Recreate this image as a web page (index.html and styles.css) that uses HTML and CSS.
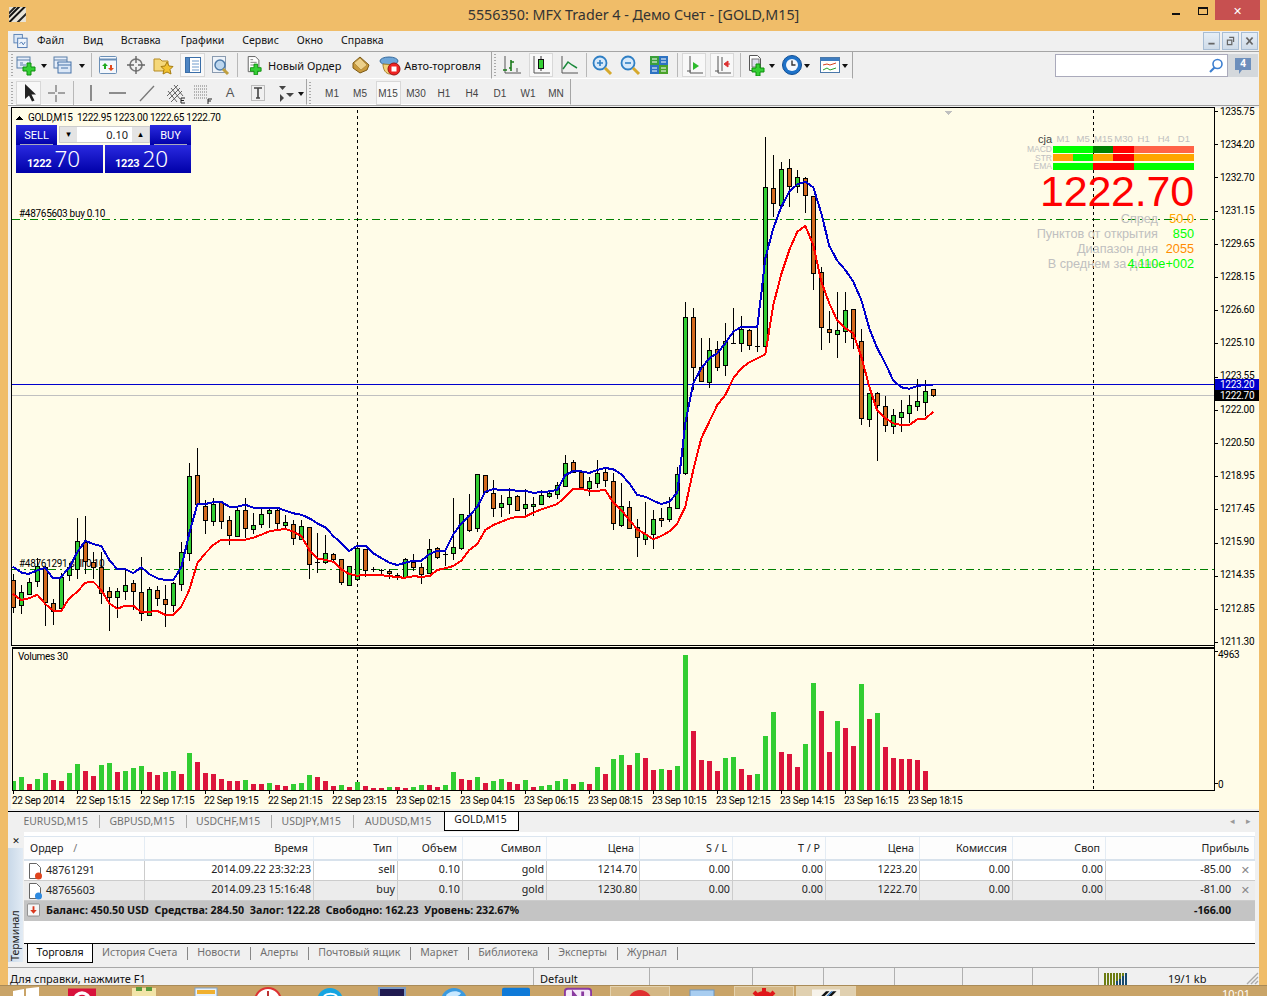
FILE: index.html
```html
<!DOCTYPE html>
<html lang="ru">
<head>
<meta charset="utf-8">
<title>MFX Trader 4</title>
<link rel="stylesheet" href="styles.css">
</head>
<body>
<div class="win">
  <header class="title">
    <svg class="logo" viewBox="0 0 18 16"><rect width="18" height="16" fill="#e8e4d8"/><path d="M0 9 9 0h3L0 12zM0 15 15 0h3L2 16H0z" fill="#111"/><path d="M5 0h3L0 8V5zM8 16l10-10v3l-7 7z" fill="#222"/></svg>
    <div class="title-text">5556350: MFX Trader 4 - Демо Счет - [GOLD,M15]</div>
    <div class="wc wc-min"></div><div class="wc wc-max"></div><div class="wc-close">✕</div>
  </header>

  <div class="client">
    <nav class="menu">
      <svg class="appicon" viewBox="0 0 16 16"><rect x="1" y="1" width="9" height="9" fill="#dbe7f5" stroke="#5b82b5"/><rect x="5" y="5" width="10" height="10" fill="#eef4fb" stroke="#4a76b0"/><path d="M7 11l2-2 2 3 2-3" fill="none" stroke="#4a76b0"/></svg>
      <span class="mi m1">Файл</span><span class="mi m2">Вид</span><span class="mi m3">Вставка</span><span class="mi m4">Графики</span><span class="mi m5">Сервис</span><span class="mi m6">Окно</span><span class="mi">Справка</span>
      <div class="mdi">
        <div class="mdib"><svg viewBox="0 0 17 18"><rect x="5" y="11" width="7" height="2" fill="#666"/></svg></div>
        <div class="mdib"><svg viewBox="0 0 17 18"><path d="M7 5h5v5M5 8h5v5H5z" fill="none" stroke="#666" stroke-width="1.4"/></svg></div>
        <div class="mdib"><svg viewBox="0 0 17 18"><path d="M5 5l7 8M12 5l-7 8" stroke="#666" stroke-width="2"/></svg></div>
      </div>
    </nav>

    <div class="row row1">
      <div class="tbar tb1">
        <i class="grip"></i>
        <span class="b w22"><svg viewBox="0 0 22 22"><rect x="2" y="3" width="13" height="11" fill="#e6eefa" stroke="#5a7fa8"/><path d="M2 6h13M5 9h3M5 11h6" stroke="#5a7fa8"/><path d="M12 9h4v4h4v4h-4v4h-4v-4H8v-4h4z" fill="#35cf35" stroke="#0d8f0d"/></svg></span>
        <span class="dd w13"></span>
        <span class="b w26"><svg viewBox="0 0 22 22"><rect x="2" y="3" width="13" height="11" fill="#e6eefa" stroke="#5a7fa8"/><path d="M2 6h13M5 9h7" stroke="#5a7fa8"/><rect x="6" y="8" width="13" height="11" fill="#dce8f7" stroke="#4672a8"/><path d="M6 11h13M9 14h7" stroke="#4672a8"/></svg></span>
        <span class="dd w11"></span>
        <i class="sep w8"></i>
        <span class="b w26"><svg viewBox="0 0 22 22"><rect x="2.500" y="2.500" width="17" height="17" rx="1" fill="#f4f8fd" stroke="#6b8fb6"/><path d="M2.500 5.500h17" stroke="#6b8fb6" stroke-width="2"/><path d="M8 9l3 3H9v3H7v-3H5z" fill="#1fa91f"/><path d="M14 17l-3-3h2v-3h2v3h2z" fill="#e2491c"/></svg></span>
        <span class="b w30"><svg viewBox="0 0 22 22"><circle cx="11" cy="11" r="6" fill="none" stroke="#777" stroke-width="1.600"/><path d="M11 2v7M11 13v7M2 11h7M13 11h7" stroke="#666" stroke-width="1.400"/></svg></span>
        <span class="b w24"><svg viewBox="0 0 22 22"><path d="M2 5h6l2 2h6v10H2z" fill="#f5d87a" stroke="#b58b25"/><path d="M15 8l2 4 4 .5-3 3 1 4.500-4-2-4 2 1-4.500-3-3 4-.5z" fill="#f2c230" stroke="#a67c10"/></svg></span>
        <span class="b w25 ml5 on"><svg viewBox="0 0 22 22"><rect x="3.500" y="3.500" width="15" height="15" fill="#fff" stroke="#3a6ea8"/><rect x="3.500" y="3.500" width="4" height="15" fill="#4f86c4" stroke="#3a6ea8"/><path d="M10 7h7M10 10h7M10 13h7M10 16h7" stroke="#6f9bcc"/></svg></span>
        <span class="b w30"><svg viewBox="0 0 22 22"><rect x="3.500" y="2.500" width="13" height="16" fill="#eef3f9" stroke="#8a9bb0"/><circle cx="11" cy="11" r="5" fill="#bcd6ee" stroke="#4d7aa8" stroke-width="1.500"/><path d="M14 15l5 5" stroke="#c0a040" stroke-width="3"/></svg></span>
        <i class="sep w4"></i>
        <span class="order ml7"><svg viewBox="0 0 18 22"><path d="M2.500 1.500h8l4 4v13h-12z" fill="#fff" stroke="#555"/><path d="M5 8h7M5 11h5M5 5h3" stroke="#777"/><path d="M9 10h4v4h4v4h-4v4H9v-4H5v-4h4z" fill="#35cf35" stroke="#0d8f0d"/></svg><span class="btxt">Новый Ордер</span></span>
        <span class="b w24 ml8"><svg viewBox="0 0 22 22"><path d="M3 9 10 3l9 8-2 5-7 3-7-5z" fill="#c99a3c" stroke="#7c5a16"/><path d="M4 9l6-5 7 7-6 5z" fill="#ecd08a" stroke="#a98334" stroke-width=".7"/></svg></span>
        <span class="order ml5"><svg class="big" viewBox="0 0 24 22"><ellipse cx="11" cy="7" rx="9" ry="4" fill="#6ea6d8" stroke="#34689c"/><path d="M5 10c0 6 3 10 7 10s6-4 6-9z" fill="#f2d27a" stroke="#a3802a"/><circle cx="16" cy="15" r="6" fill="#e22" stroke="#911"/><rect x="13.500" y="12.500" width="5" height="5" fill="#fff"/></svg><span class="btxt tight">Авто-торговля</span></span>
      </div>
      <div class="tbar tb2">
        <i class="grip"></i>
        <span class="b w24 ml2"><svg viewBox="0 0 22 22"><path d="M4 2v17h16" fill="none" stroke="#555"/><path d="M2 16h4M10 6v11M8 14h2M10 8h3" stroke="#1b7a1b" stroke-width="1.600"/><path d="M16 14v4" stroke="#555"/></svg></span>
        <span class="b w24 ml5 on"><svg viewBox="0 0 22 22"><path d="M4 2v17h16" fill="none" stroke="#555"/><path d="M11 2v15" stroke="#333"/><rect x="8.500" y="5.500" width="5" height="9" fill="#35cf35" stroke="#111"/></svg></span>
        <span class="b w24 ml4"><svg viewBox="0 0 22 22"><path d="M4 2v17h16" fill="none" stroke="#555"/><path d="M5 15l5-7 4 3 5 3" fill="none" stroke="#1b8a3b" stroke-width="1.500"/></svg></span>
        <i class="sep w10"></i>
        <span class="b w22"><svg viewBox="0 0 22 22"><circle cx="9" cy="9" r="6.500" fill="#d7e9fa" stroke="#2f7fc4" stroke-width="1.800"/><path d="M6 9h6M9 6v6" stroke="#2f7fc4" stroke-width="1.600"/><path d="M14 14l6 6" stroke="#d6a92d" stroke-width="3"/></svg></span>
        <span class="b w24 ml5"><svg viewBox="0 0 22 22"><circle cx="9" cy="9" r="6.500" fill="#d7e9fa" stroke="#2f7fc4" stroke-width="1.800"/><path d="M6 9h6" stroke="#2f7fc4" stroke-width="1.600"/><path d="M14 14l6 6" stroke="#d6a92d" stroke-width="3"/></svg></span>
        <span class="b w24 ml5"><svg viewBox="0 0 22 22"><rect x="2" y="2" width="9" height="9" fill="#3aa03a"/><rect x="11" y="2" width="9" height="9" fill="#2d72c2"/><rect x="2" y="11" width="9" height="9" fill="#2d72c2"/><rect x="11" y="11" width="9" height="9" fill="#4aa32a"/><path d="M4 5h5M13 5h5M4 14h5M13 14h5M4 8h5M13 8h5M4 17h5M13 17h5" stroke="#fff"/></svg></span>
        <i class="sep w9 ml1"></i>
        <span class="b w24 ml1 on"><svg viewBox="0 0 22 22"><path d="M7 2v17H20M4 17h4" fill="none" stroke="#555"/><path d="M10 8l6 4-6 4z" fill="#2dbb2d"/></svg></span>
        <span class="b w24 ml4 on"><svg viewBox="0 0 22 22"><path d="M7 2v17H20M4 17h4M11 3v14" fill="none" stroke="#555"/><path d="M19 10h-5M17 7l-4 3 4 3z" fill="#d33" stroke="#d33"/></svg></span>
        <i class="sep w9 ml1"></i>
        <span class="b w25"><svg viewBox="0 0 22 22"><path d="M3.500 1.500h8l3 3v12h-11z" fill="#fff" stroke="#555"/><rect x="6" y="5" width="7" height="8" fill="#dde" stroke="#777"/><path d="M10 10h4v4h4v4h-4v4h-4v-4H6v-4h4z" fill="#35cf35" stroke="#0d8f0d"/></svg></span>
        <span class="dd w5"></span>
        <span class="b w24 ml6"><svg viewBox="0 0 22 22"><circle cx="11" cy="11" r="9.500" fill="#1f72c8" stroke="#124f94"/><circle cx="11" cy="11" r="6" fill="#f4f8fc"/><path d="M11 6.500V11h3.500" fill="none" stroke="#333" stroke-width="1.400"/></svg></span>
        <span class="dd w6"></span>
        <span class="b w24 ml8"><svg viewBox="0 0 22 22"><rect x="1.500" y="3.500" width="19" height="15" fill="#fff" stroke="#4a78aa"/><rect x="2" y="4" width="18" height="3" fill="#3f7dc0"/><path d="M4 11l4-1 3 1 6-2" fill="none" stroke="#d6411c"/><path d="M4 16l4-2 3 2 6-2" fill="none" stroke="#2aa12a"/></svg></span>
        <span class="dd w6"></span>
      </div>
      <div class="search">
        <div class="sbox"><svg viewBox="0 0 16 16"><circle cx="9.500" cy="6" r="4.500" fill="none" stroke="#3d7fd0" stroke-width="1.600"/><path d="M6.500 9.500 2 14" stroke="#3d7fd0" stroke-width="2.200"/></svg></div>
        <div class="msg"><svg viewBox="0 0 18 18"><path d="M1 1h16v12H8l-3 4v-4H1z" fill="#6d8fbc"/></svg><span>4</span></div>
      </div>
    </div>

    <div class="row row2">
      <div class="tbar tb3">
        <i class="grip"></i>
        <span class="b w25 ml1 on"><svg viewBox="0 0 22 22"><path d="M7 2v15l4-3.500 3 6 2.500-1-3-6H18z" fill="#222"/></svg></span>
        <span class="b w24 ml3"><svg viewBox="0 0 22 22"><path d="M11 3v7M11 13v7M3 11h7M13 11h7" stroke="#555"/></svg></span>
        <i class="sep w10"></i>
        <span class="b w24"><svg viewBox="0 0 22 22"><path d="M12 3v16" stroke="#555" stroke-width="1.300"/></svg></span>
        <span class="b w24 ml4"><svg viewBox="0 0 22 22"><path d="M2 11h17" stroke="#555" stroke-width="1.300"/></svg></span>
        <span class="b w24 ml5"><svg viewBox="0 0 22 22"><path d="M4 19 18 4" stroke="#777" stroke-width="1.300"/></svg></span>
        <span class="b w24 ml4"><svg viewBox="0 0 22 22"><path d="M3 14 14 3M5 17 16 6M7 20 18 9M4 9l9 11M7 6l9 11M10 3l9 11" stroke="#555" stroke-width=".9"/><path d="M17 16h4M17 18.500h3M17 21h4M17 16v5" stroke="#222"/></svg></span>
        <span class="b w24 ml3"><svg viewBox="0 0 22 22"><path d="M3 4h14M3 7h14M3 10h14M3 13h14M3 16h14" stroke="#777" stroke-dasharray="1 1"/><path d="M17 17h4M17 19h3M17 17v5" stroke="#222"/></svg></span>
        <span class="b w24 ml4 lt">A</span>
        <span class="b w24 ml4"><svg viewBox="0 0 22 22"><rect x="4.500" y="3.500" width="13" height="15" fill="none" stroke="#888" stroke-dasharray="1 1"/><path d="M7 6h8M11 6v10M9 16h4" stroke="#444" stroke-width="1.600" fill="none"/></svg></span>
        <span class="b w24 ml4"><svg viewBox="0 0 22 22"><path d="M4 4h7l-3.500 4zM11 11h8l-4 4zM5 12l4 4-4 4z" fill="#444"/></svg></span>
        <span class="dd w6"></span>
      </div>
      <div class="tbar tb4">
        <i class="grip"></i>
        <span class="tf ml5">M1</span><span class="tf">M5</span><span class="tf on">M15</span><span class="tf">M30</span><span class="tf">H1</span><span class="tf">H4</span><span class="tf">D1</span><span class="tf">W1</span><span class="tf">MN</span>
      </div>
    </div>

    <div class="chartwrap">
      <svg id="chart" class="chart" viewBox="8 106 1251 705" width="1251" height="705">
        <rect x="8" y="106" width="1251" height="705" fill="#f0f0f0"/>
        <rect x="11" y="108" width="1248" height="701" fill="#fffce8"/>
        <g class="ct">
          <text x="28" y="121">GOLD,M15  1222.95 1223.00 1222.65 1222.70</text>
          <path d="M15 120h8l-4-4z" fill="#000"/>
          <text x="19" y="217">#48765603 buy 0.10</text>
          <text x="19" y="567">#48761291 sell 0.10</text>
          <text x="18" y="660">Volumes 30</text>
        </g>
        <g class="ax">
          <text x="1220" y="115">1235.75</text><text x="1220" y="148">1234.20</text><text x="1220" y="181">1232.70</text><text x="1220" y="214">1231.15</text><text x="1220" y="247">1229.65</text><text x="1220" y="280">1228.15</text><text x="1220" y="313">1226.60</text><text x="1220" y="346">1225.10</text><text x="1220" y="379">1223.55</text><text x="1220" y="413">1222.00</text><text x="1220" y="446">1220.50</text><text x="1220" y="479">1218.95</text><text x="1220" y="512">1217.45</text><text x="1220" y="545">1215.90</text><text x="1220" y="578">1214.35</text><text x="1220" y="612">1212.85</text><text x="1220" y="645">1211.30</text>
          <text x="1218" y="658">4963</text><text x="1218" y="788">0</text>
          <text x="12" y="804">22 Sep 2014</text><text x="76" y="804">22 Sep 15:15</text><text x="140" y="804">22 Sep 17:15</text><text x="204" y="804">22 Sep 19:15</text><text x="268" y="804">22 Sep 21:15</text><text x="332" y="804">22 Sep 23:15</text><text x="396" y="804">23 Sep 02:15</text><text x="460" y="804">23 Sep 04:15</text><text x="524" y="804">23 Sep 06:15</text><text x="588" y="804">23 Sep 08:15</text><text x="652" y="804">23 Sep 10:15</text><text x="716" y="804">23 Sep 12:15</text><text x="780" y="804">23 Sep 14:15</text><text x="844" y="804">23 Sep 16:15</text><text x="908" y="804">23 Sep 18:15</text>
        </g>
      </svg>

      <div class="trade">
        <div class="trow">
          <div class="tbtn small"><span>SELL</span></div>
          <div class="lot"><span class="spin">▾</span><span class="lotv">0.10</span><span class="spin">▴</span></div>
          <div class="tbtn small"><span>BUY</span></div>
        </div>
        <div class="trow gap">
          <div class="tbtn price pl"><b>1222</b><em>70</em></div>
          <div class="tbtn price pr"><b>1223</b><em>20</em></div>
        </div>
      </div>

      <div class="cja">
        <div class="chead"><span class="cname">cja</span><div class="tfs"><span>M1</span><span>M5</span><span>M15</span><span>M30</span><span>H1</span><span>H4</span><span>D1</span></div></div>
        <div class="crow"><span>MACD</span><div class="bars"><i class="s2 lime"></i><i class="s1 grn"></i><i class="s1 red"></i><i class="s3 tom"></i></div></div>
        <div class="crow"><span>STR</span><div class="bars"><i class="s1 org"></i><i class="s1 lime"></i><i class="s1 org"></i><i class="s1 red"></i><i class="s3 org"></i></div></div>
        <div class="crow"><span>EMA</span><div class="bars"><i class="s2 lime"></i><i class="s2 red"></i><i class="s3 lime"></i></div></div>
        <div class="cprice">1222.70</div>
        <div class="cl"><span class="lbl">Спред</span><span class="val v-org">50.0</span></div>
        <div class="cl"><span class="lbl">Пунктов от открытия</span><span class="val v-lime">850</span></div>
        <div class="cl"><span class="lbl">Диапазон дня</span><span class="val v-dorg">2055</span></div>
        <div class="cl"><span class="lbl">В среднем за день</span><span class="val v-lime">4.110e+002</span></div>
      </div>
    </div>

    <div class="tabs">
      <span class="tab">EURUSD,M15</span><span class="tab">GBPUSD,M15</span><span class="tab">USDCHF,M15</span><span class="tab">USDJPY,M15</span><span class="tab">AUDUSD,M15</span><span class="tab active">GOLD,M15</span>
      <span class="scroll">◂</span><span class="scroll">▸</span>
    </div>

    <section class="term">
      <aside class="side"><span class="x">✕</span><span class="vt">Терминал</span></aside>
      <div class="tmain">
        <div class="grid head">
          <span class="l">Ордер <span class="sort">/</span></span><span>Время</span><span>Тип</span><span>Объем</span><span>Символ</span><span>Цена</span><span>S / L</span><span>T / P</span><span>Цена</span><span>Комиссия</span><span>Своп</span><span>Прибыль</span>
        </div>
        <div class="grid rowd">
          <span class="l"><svg viewBox="0 0 16 18"><path d="M2.500 1.500h7l4 4v11h-11z" fill="#fff" stroke="#666"/><circle cx="11.500" cy="14" r="3.500" fill="#e0441c"/></svg>48761291</span><span>2014.09.22 23:32:23</span><span>sell</span><span>0.10</span><span>gold</span><span>1214.70</span><span>0.00</span><span>0.00</span><span>1223.20</span><span>0.00</span><span>0.00</span><span class="pf">-85.00<i class="cx">✕</i></span>
        </div>
        <div class="grid rowd alt">
          <span class="l"><svg viewBox="0 0 16 18"><path d="M2.500 1.500h7l4 4v11h-11z" fill="#fff" stroke="#666"/><circle cx="11.500" cy="14" r="3.500" fill="#2d8ae0"/></svg>48765603</span><span>2014.09.23 15:16:48</span><span>buy</span><span>0.10</span><span>gold</span><span>1230.80</span><span>0.00</span><span>0.00</span><span>1222.70</span><span>0.00</span><span>0.00</span><span class="pf">-81.00<i class="cx">✕</i></span>
        </div>
        <div class="sum">
          <svg viewBox="0 0 14 14"><rect x=".5" y=".5" width="13" height="13" rx="1" fill="#f6f6f6" stroke="#888"/><path d="M7 11 3.500 7H6V3h2v4h2.500z" fill="#d9381e"/></svg>
          <b class="stext">Баланс: 450.50 USD&nbsp; Средства: 284.50&nbsp; Залог: 122.28&nbsp; Свободно: 162.23&nbsp; Уровень: 232.67%</b>
          <b class="stotal">-166.00</b>
        </div>
        <div class="blank"></div>
        <div class="btabs">
          <span class="btab active">Торговля</span><span class="btab">История Счета</span><span class="btab">Новости</span><span class="btab">Алерты</span><span class="btab">Почтовый ящик</span><span class="btab">Маркет</span><span class="btab">Библиотека</span><span class="btab">Эксперты</span><span class="btab">Журнал</span>
        </div>
      </div>
    </section>

    <footer class="status">
      <span class="st s-help">Для справки, нажмите F1</span>
      <span class="st s-def">Default</span>
      <span class="st s-a"></span><span class="st s-b"></span><span class="st s-c"></span><span class="st s-c2"></span><span class="st s-d"></span><span class="st s-e"></span>
      <span class="st s-conn"><svg viewBox="0 0 24 12"><path d="M1 0v12M4 0v12M7 0v12M10 0v12" stroke="#6d7d12" stroke-width="2"/><path d="M13 8v4M16 6v6M19 3v9M22 0v12" stroke="#174a6e" stroke-width="2"/><path d="M13 0v8M16 0v6M19 0v3" stroke="#6d7d12" stroke-width="2"/></svg><span>19/1 kb</span></span>
      <svg class="sgrip" viewBox="0 0 14 14"><path d="M13 2 2 13M13 6l-7 7M13 10l-3 3" stroke="#aaa" stroke-width="1.400"/></svg>
    </footer>
  </div>

  <div class="taskbar">
    <span class="slot first"><svg viewBox="0 0 28 24"><path d="M1 4l11-2v10H1zM14 1.500 27 0v12H14z" fill="#fff"/></svg></span>
    <span class="slot"><svg viewBox="0 0 32 24"><rect x="0" y="0" width="32" height="24" fill="#d8123c"/><circle cx="16" cy="13" r="10" fill="#fff"/><circle cx="16" cy="13" r="6" fill="#d8123c"/></svg></span>
    <span class="slot"><svg viewBox="0 0 28 24"><rect x="2" y="1" width="24" height="22" fill="#f2e4a8"/><path d="M6 0h6v4H6zM16 0h6v4h-6z" fill="#5a9a3a"/></svg></span>
    <span class="slot"><svg viewBox="0 0 24 24"><rect x="1" y="1" width="22" height="22" fill="#e8f1fa" stroke="#7ea2c8"/><rect x="3" y="3" width="18" height="4" fill="#f0b030"/></svg></span>
    <span class="slot"><svg viewBox="0 0 28 24"><circle cx="14" cy="14" r="13" fill="#fff" stroke="#d33" stroke-width="2"/><path d="M14 4v10l6 3" stroke="#b33" fill="none" stroke-width="2"/></svg></span>
    <span class="slot"><svg viewBox="0 0 28 24"><circle cx="14" cy="14" r="13" fill="#15a5e2"/><path d="M8 9c3-3 10-3 13 0" stroke="#fff" stroke-width="2" fill="none"/></svg></span>
    <span class="slot"><svg viewBox="0 0 28 24"><rect x="0" y="0" width="28" height="24" fill="#7d9cc4"/><rect x="2" y="2" width="24" height="22" fill="#201a50"/></svg></span>
    <span class="slot"><svg viewBox="0 0 28 24"><circle cx="14" cy="14" r="13" fill="#3a9ae0"/><path d="M6 8c4-4 10-5 15-2-2 4-7 3-9 6-3 0-5-1-6-4z" fill="#c8e8ff"/></svg></span>
    <span class="slot"><svg viewBox="0 0 30 24"><rect x="0" y="0" width="30" height="24" rx="2" fill="#0f7ad8"/></svg></span>
    <span class="slot"><svg viewBox="0 0 30 24"><rect x="1" y="1" width="28" height="22" rx="3" fill="#f5e9f8" stroke="#8a3aa0" stroke-width="2"/><path d="M10 20V6l10 12V4" stroke="#8a3aa0" stroke-width="3" fill="none"/></svg></span>
    <span class="slot box b10"><svg viewBox="0 0 28 24"><circle cx="14" cy="14" r="12" fill="#e03030"/></svg></span>
    <span class="slot"><svg viewBox="0 0 28 24"><rect x="2" y="3" width="24" height="21" fill="#a8cdf0" stroke="#6a96c4"/></svg></span>
    <span class="slot box b12"><svg viewBox="0 0 28 24"><circle cx="14" cy="14" r="8" fill="none" stroke="#e0181a" stroke-width="6"/><path d="M14 0v6M4 4l4 4M24 4l-4 4M0 14h6M22 14h6" stroke="#e0181a" stroke-width="4"/></svg></span>
    <span class="slot box b13"><svg viewBox="0 0 32 24"><rect width="32" height="24" fill="#f6f2ea"/><path d="M6 12 16 2h4L10 12zM14 12 24 2h4L18 12z" fill="#111"/><path d="M12 12 22 2h2L14 12z" fill="#2a6fb8"/></svg></span>
    <span class="clock">10:01</span>
  </div>
</div>
<script src="chart.js"></script>
</body>
</html>
```

FILE: styles.css
```css
:root{--ui:"Noto Sans","Open Sans","DejaVu Sans",sans-serif;--nar:Roboto,"Liberation Sans",sans-serif}
*{box-sizing:border-box}
html,body{margin:0;padding:0;height:100%;overflow:hidden}
body{font-family:var(--ui);font-size:11px;color:#111}
i,em{font-style:normal}
.win{width:1267px;height:996px;background:#f0bd69;display:flex;flex-direction:column;overflow:hidden;position:relative}
.title{height:31px;flex:none;position:relative;display:flex;align-items:flex-start}
.logo{width:17px;height:15px;margin:7px 0 0 9px}
.title-text{position:absolute;left:0;width:1267px;top:4px;text-align:center;font-size:14.300px;line-height:22px;color:#333}
.wc{position:absolute}
.wc-min{left:1172px;top:13px;width:8px;height:2px;background:#111}
.wc-max{left:1198px;top:7px;width:10px;height:8px;border:1px solid #111;border-top-width:2px}
.wc-close{position:absolute;left:1215px;top:0;width:45px;height:20px;background:#c75050;color:#fff;font-size:11px;line-height:21px;text-align:center}
.client{width:1251px;margin:0 8px;flex:none;height:954px;background:#f0f0f0;display:flex;flex-direction:column}
.menu{height:21px;flex:none;display:flex;align-items:center;border-bottom:1px solid #a5a5a5;padding:0 0 0 5px;position:relative;font-size:10.500px}
.appicon{width:15px;height:16px;flex:none;margin-right:9px}
.mi{white-space:nowrap;line-height:15px;margin-bottom:1px}
.m1{margin-right:19px}.m2{margin-right:18px}.m3{margin-right:20px}.m4{margin-right:18px}.m5{margin-right:18px}.m6{margin-right:18px}
.mdi{margin-left:auto;display:flex;gap:2px;margin-right:1px}
.mdib{width:17px;height:18px;border:1px solid #a8bdd4;background:linear-gradient(#e6eef6,#cfdbe8)}
.mdib svg{display:block;width:15px;height:16px}
.row{display:flex;flex:none;align-items:stretch}
.row1{height:27px;border-bottom:0}
.row2{height:27px;border-bottom:1px solid #a0a0a0}
.tbar{display:flex;align-items:center;border-right:1px solid #a5a5a5;border-bottom:1px solid #fff}
.tb1{padding-left:1px;width:484px}
.tb2{width:361px}
.tb3{padding:2px 0 0 1px;width:299px}
.tb4{padding-top:2px;width:264px}
.grip{width:6px;height:22px;flex:none;background:repeating-linear-gradient(#aaa 0 1px,transparent 1px 3px);background-size:2px 100%;background-repeat:no-repeat;background-position:2px 0}
.b{height:24px;flex:none;display:flex;align-items:center;justify-content:center}
.b svg{width:22px;height:22px}
.on{background:#f8f8f8;outline:1px solid #d8d8d8;outline-offset:-1px}
.w5{width:5px}.w6{width:6px}.w8{width:8px}.w9{width:9px}.w4{width:4px}.w10{width:10px}.w11{width:11px}.w13{width:13px}.w22{width:22px}.w24{width:24px}.w25{width:25px}.w26{width:26px}.w30{width:30px}
.ml1{margin-left:1px}.ml2{margin-left:2px}.ml3{margin-left:3px}.ml4{margin-left:4px}.ml5{margin-left:5px}.ml6{margin-left:6px}.ml7{margin-left:7px}.ml8{margin-left:8px}
.dd{flex:none;height:24px;position:relative}
.dd::after{content:"";position:absolute;left:50%;top:11px;margin-left:-3px;border:3px solid transparent;border-top:4px solid #111;border-bottom:0}
.sep{flex:none;height:24px;position:relative}
.sep::after{content:"";position:absolute;left:50%;top:0;width:1px;height:24px;background:#b8b8b8}
.order{display:flex;align-items:center;flex:none}
.order svg{width:16px;height:20px;flex:none}
.order svg.big{width:24px;height:22px}
.btxt{margin-left:6px;white-space:nowrap;font-size:11px}
.btxt.tight{margin-left:2px}
.lt{font-size:13px;color:#555;font-family:"Liberation Sans",sans-serif}
.tf{width:28px;height:24px;flex:none;text-align:center;line-height:25px;font-size:10px;color:#444;font-family:"Liberation Sans",sans-serif}
.tf.on{width:25px;margin:0 1.500px}
.search{margin-left:auto;display:flex;height:23px;margin-top:2px;margin-right:1px}
.sbox{width:173px;background:#fff;border:1px solid #aab;display:flex;justify-content:flex-end;align-items:center;padding-right:3px}
.sbox svg{width:16px;height:16px}
.msg{width:30px;background:#d4d8dc;position:relative;display:flex;align-items:center;justify-content:center}
.msg svg{width:18px;height:18px}
.msg span{position:absolute;left:0;width:30px;top:2px;text-align:center;color:#fff;font-weight:700;line-height:15px;font-size:10px}

.chartwrap{position:relative;width:1251px;height:705px;flex:none}
.chart{display:block;shape-rendering:crispEdges}
.ct text,.ax text{font-family:var(--nar);font-size:10px;letter-spacing:-.3px;fill:#000;white-space:pre}
.tag{font-family:var(--nar);font-size:10px;letter-spacing:-.3px;fill:#fff}
.trade{position:absolute;left:8px;top:19px;width:175px}
.trow{display:flex;height:20px}
.trow.gap{height:28px;gap:2px}
.tbtn{background:linear-gradient(#2a2ae0,#0000a8);color:#fff}
.small{width:41px;display:flex;justify-content:center}
.small span{width:33px;height:20px;border-bottom:1px solid #aab;text-align:center;font-size:11px;line-height:21px;font-family:var(--nar)}
.lot{width:91px;height:17px;margin:1px 0 0 2px;flex:none;background:#fff;border:1px solid #ccc;display:flex;align-items:center}
.spin{width:17px;height:15px;flex:none;background:#e4e4e4;text-align:center;line-height:14px;font-size:9px;color:#000}
.lotv{flex:1;text-align:right;padding-right:4px;font-size:11px;color:#222}
.price{display:flex;align-items:flex-end;line-height:26px}
.pl{width:87px;padding-left:11px}.pr{width:86px;padding-left:10px}
.price b{font-weight:700;font-size:11px;letter-spacing:-.2px;line-height:18px;font-family:var(--nar);margin-right:3px}
.price em{font-size:22.500px;font-family:var(--ui);font-weight:300;line-height:28px}
.cja{position:absolute;left:1011px;top:26px;width:175px;font-family:"Liberation Sans",sans-serif;color:#c0c0c0}
.chead{display:flex;height:13px;align-items:center;font-size:10px}
.cname{width:34px;text-align:right;color:#444;font-size:11px;padding-right:1px}
.tfs{width:141px;display:grid;grid-template-columns:repeat(7,1fr);text-align:center;font-size:9.500px}
.crow{display:flex;height:8.500px;align-items:center;font-size:8.500px}
.crow>span{width:34px;text-align:right;padding-right:1px}
.bars{width:141px;height:7px;display:grid;grid-template-columns:repeat(7,1fr)}
.s1{grid-column:span 1}.s2{grid-column:span 2}.s3{grid-column:span 3}
.lime{background:#0f0}.grn{background:#008000}.red{background:#f00}.tom{background:#ff6347}.org{background:#ffa500}
.cprice{color:#f00;font-size:43px;line-height:40px;text-align:right;height:41px;letter-spacing:-.2px}
.cl{display:flex;height:15px;line-height:15px;font-size:12.700px}
.lbl{width:139px;text-align:right;white-space:nowrap;display:flex;justify-content:flex-end}
.val{width:36px;display:flex;justify-content:flex-end;white-space:nowrap}
.v-org{color:#ffa500}.v-lime{color:#0f0}.v-dorg{color:#ff8c00}

.tabs{height:21px;flex:none;border-top:1px solid #000;display:flex;align-items:stretch;padding-left:6px;font-size:10.400px;color:#707070;position:relative}
.tab{padding:0 11px 0 9.500px;line-height:13px;white-space:nowrap;height:13px;margin-top:3px;border-right:1px solid #aaa}
.tab.active{background:#fff;color:#111;border:1px solid #000;border-top:0;height:19px;line-height:15px;margin:0;padding:0 11px 0 9px}
.tab:nth-child(4){padding-right:12px}
.tab:nth-child(5){border-right:0;padding:0 13px 0 11px}
.scroll{position:absolute;top:2px;color:#999;font-size:9px}
.scroll:nth-last-child(2){left:1222px}
.scroll:nth-last-child(1){left:1238px}
.term{height:135px;flex:none;display:flex}
.side{width:16px;flex:none;position:relative;display:flex;flex-direction:column}
.x{height:15px;margin-top:1px;font-size:9px;line-height:15px;text-align:center;font-weight:700;color:#111}
.vt{flex:none;width:15px;height:114px;background:linear-gradient(90deg,#e2ebf4,#c8d8e8);writing-mode:vertical-rl;transform:rotate(180deg);font-size:10.500px;padding-top:1px;line-height:14px;text-align:left;color:#222}
.tmain{width:1231px;flex:none;padding-top:4px;display:flex;flex-direction:column;height:131px;background:#fff}
.grid{display:grid;grid-template-columns:121px 169px 84px 65px 84px 93px 93px 93px 94px 93px 93px 149px;white-space:nowrap;text-align:right}
.head{height:25px;line-height:22px;background:#fdfdfd;border-top:1px solid #dce6f0;border-bottom:2px solid #d8e2ec;color:#222;font-size:10.700px}
.head>span{padding-right:5px;border-right:1px solid #e4ecf4}
.head>.l{padding-left:6px;text-align:left}
.sort{color:#777;margin-left:7px}
.rowd{height:20px;line-height:17px;border-bottom:1px solid #ccc;color:#222;font-size:10.700px;background:#fff}
.rowd.alt{background:#ececec}
.rowd>span{padding-right:2px;border-right:1px solid #ccc}
.rowd>.l{padding-left:3px;text-align:left;display:flex;align-items:center;gap:3px}
.rowd>.l svg{width:16px;height:18px;flex:none}
.rowd>.pf{padding-right:24px;border-right:0;position:relative}
.cx{position:absolute;right:5px;top:0;color:#888;font-size:11px;font-weight:700}
.sum{height:20px;line-height:16px;background:#c4c4c4;display:flex;align-items:center;padding:0 0 3px 3px;font-size:10.700px;color:#111}
.sum svg{width:13px;height:14px;flex:none}
.stext{margin-left:6px;font-weight:700;white-space:nowrap}
.stotal{margin-left:auto;margin-right:24px;font-weight:700}
.blank{flex:1}
.btabs{height:20px;flex:none;border-top:1px solid #000;background:#f0f0f0;display:flex;padding-left:3px;color:#707070;font-size:10.550px}
.btab{padding:0 10px 0 9px;height:13px;margin-top:3px;line-height:11px;border-right:1px solid #888;white-space:nowrap}
.btab.active{background:#fff;color:#111;height:19px;margin:0;line-height:16px;border:1px solid #000;border-top:0;width:66px;padding:0;text-align:center}
.status{height:18px;flex:none;border-top:1px solid #a8a8a8;margin-top:auto;position:relative;font-size:11px;color:#111}
.st{position:absolute;top:0;height:18px;line-height:22px;white-space:nowrap;border-left:1px solid #b0b0b0}
.s-help{left:2px;border-left:0}
.s-def{left:525px;padding-left:6px}
.s-a{left:641px}.s-b{left:744px}.s-c{left:815px}.s-c2{left:886px}.s-d{left:954px}.s-e{left:1024px}
.s-conn{left:1090px;display:flex;align-items:flex-start;padding-left:5px}
.s-conn svg{width:24px;height:12px;margin-top:5px}
.s-conn span{margin-left:40px}
.sgrip{position:absolute;right:0;bottom:0;width:14px;height:14px}
.taskbar{flex:1;display:flex;background:#c9a468;overflow:hidden;position:relative;border-top:1px solid #a98b58}
.slot{width:62px;height:11px;flex:none;display:flex;justify-content:center;overflow:hidden;padding-top:1px}
.slot.first{width:51px}
.slot svg{width:28px;height:24px;flex:none}
.box{background:#d4b785;border:1px solid #e4d2ae;border-bottom:0;width:60px;margin:0 1px}
.b13{background:#e0d0b0}
.clock{position:absolute;left:1222px;top:1px;color:#fff;font-size:11px;line-height:14px}
```

FILE: chart.js
```js
(function () {
  var svg = document.getElementById('chart');
  var NS = 'http://www.w3.org/2000/svg';
  function el(name, attrs, text) {
    var n = document.createElementNS(NS, name);
    for (var k in attrs) n.setAttribute(k, attrs[k]);
    if (text) n.textContent = text;
    svg.appendChild(n);
    return n;
  }
  var GREEN = '#32cd32', ORANGE = '#d2691e', CRIMSON = '#dc143c';

  // price gridlines behind the candles
  el('path', {d: 'M12 219.5H1214M12 569.5H1214', stroke: '#008000', 'stroke-dasharray': '8 4 2 4', fill: 'none'});
  el('path', {d: 'M12 395.5H1214', stroke: '#c0c0c0', fill: 'none'});
  el('path', {d: 'M12 384.5H1214', stroke: '#0000cd', fill: 'none'});
  el('path', {d: 'M357.5 110V645M357.5 648V790M1093.5 110V645M1093.5 648V790', stroke: '#000', 'stroke-dasharray': '3 3', fill: 'none'});

  // candles: [wick top, body top, body bottom, wick bottom, colour], measured per chart region
  var s1 = [
    [372,390,472,488,'o'],[405,427,466,491,'g'],[385,397,431,434,'g'],[325,347,392,410,'g'],[348,350,457,527,'o'],
    [447,460,482,524,'o'],[370,380,475,478,'g'],[340,352,376,392,'g'],[205,274,358,386,'g'],[198,275,334,372,'o'],
    [305,337,350,386,'o'],[305,352,428,461,'o'],[411,424,442,542,'o'],[415,424,440,503,'g'],[360,406,422,450,'g'],
    [390,400,424,480,'o'],[322,427,490,512,'o'],[412,418,494,494,'g'],[408,421,445,468,'o'],[405,448,461,530,'o'],
    [395,400,464,486,'g'],[277,307,403,422,'g'],[40,79,310,332,'g'],[-6,76,163,165,'o'],[150,169,211,252,'o'],
    [144,161,214,228,'g'],[152,157,214,237,'o'],[198,211,256,285,'o'],[175,179,259,262,'g'],[145,181,235,265,'o'],
    [190,226,238,252,'g'],[175,193,223,233,'g'],[175,181,190,235,'g'],[172,179,220,240,'o'],[195,217,224,240,'g'],
    [210,221,265,285,'o'],[210,229,268,270,'g'],[231,232,341,387,'o'],[250,336,336,368,'d'],[255,310,337,342,'g'],
    [310,313,326,335,'o']
  ];
  var s2 = [
    [357,357,425,436,'o'],[377,379,436,437,'g'],[315,325,418,420,'g'],[327,327,391,410,'o'],[380,388,388,395,'d'],
    [387,391,391,405,'d'],[387,394,400,418,'o'],[400,406,406,420,'d'],[355,358,412,414,'g'],[343,365,380,392,'o'],
    [370,382,401,432,'o'],[297,328,398,398,'g'],[320,325,350,356,'o'],[325,341,341,378,'d'],[175,320,338,360,'g'],
    [223,223,325,330,'g'],[162,226,270,275,'o'],[103,103,265,275,'g'],[106,106,155,155,'o'],[120,160,205,230,'o'],
    [165,190,202,230,'g'],[145,172,193,222,'g'],[165,169,209,212,'o'],[148,193,205,235,'g'],[172,193,199,227,'g'],
    [150,166,191,196,'g'],[155,160,169,175,'g'],[125,136,163,178,'g'],[45,70,139,140,'g'],[60,67,95,96,'o'],
    [90,96,142,143,'o'],[110,124,145,167,'g'],[60,100,128,145,'g'],[82,97,121,142,'o'],[100,124,250,270,'o'],
    [130,199,254,260,'g'],[183,202,265,265,'o'],[237,262,292,350,'o'],[187,283,296,315,'g'],[210,238,281,327,'g'],
    [205,235,241,262,'o'],[172,202,238,245,'g'],[80,103,205,207,'g']
  ];
  var s3 = [
    [517,560,1029,1035,'g'],[535,562,710,780,'o'],[625,712,752,755,'o'],[625,661,755,773,'g'],[633,658,710,723,'o'],
    [580,634,704,738,'g'],[535,638,638,642,'d'],[558,598,638,665,'g'],[596,601,644,660,'o'],[590,648,648,665,'d'],
    [22,170,648,650,'g'],[75,175,220,260,'o'],[97,118,225,228,'g'],[88,115,167,230,'o'],[120,142,168,188,'g'],
    [140,145,196,250,'o'],[199,199,428,480,'o'],[412,425,590,660,'o'],[543,598,605,638,'o'],[487,601,611,684,'g'],
    [487,541,604,638,'g'],[538,538,623,657,'o'],[598,634,865,885,'o'],[788,788,868,890,'g'],[785,790,826,992,'o'],
    [798,829,886,906,'o'],[838,856,889,911,'g'],[810,847,862,905,'g'],[796,826,850,880,'g'],[747,814,829,843,'g'],
    [750,784,817,858,'g'],[776,778,796,800,'o']
  ];
  var candles = [];
  function add(list, base) {
    list.forEach(function (c) {
      candles.push({t: Math.round(base + c[0] / 3), o: Math.round(base + c[1] / 3), b: Math.round(base + c[2] / 3), l: Math.round(base + c[3] / 3), c: c[4]});
    });
  }
  add(s1, 450); add(s2, 440); add(s3, 130);
  candles.forEach(function (c, i) {
    var x = 13 + 8 * i;
    el('path', {d: 'M' + (x + .5) + ' ' + c.t + 'V' + c.l, stroke: '#000', fill: 'none'});
    if (c.c === 'd') {
      el('path', {d: 'M' + (x - 2) + ' ' + (c.o + .5) + 'h5', stroke: '#000', fill: 'none'});
    } else {
      el('rect', {x: x - 1.5, y: c.o + .5, width: 4, height: c.b - c.o, fill: c.c === 'g' ? GREEN : ORANGE, stroke: '#000'});
    }
  });

  // moving averages
  function pts(list, ox, oy) {
    return list.map(function (p) { return (ox + p[0] / 3).toFixed(1) + ',' + (oy + p[1] / 3).toFixed(1); }).join(' ');
  }
  var blue = pts([[8,350],[35,368],[55,372],[80,362],[106,353],[128,385],[150,384],[180,350],[200,310],[226,272],[250,282],[274,288],[298,330],[322,358],[346,358],[370,369],[394,352],[418,372],[442,385],[466,390],[490,390],[514,352],[538,250],[562,163],[586,162],[610,157],[634,155],[658,170],[682,170],[706,164],[730,173],[754,173],[778,173],[802,173],[826,182],[850,190],[874,194],[898,205],[922,220],[946,232],[970,258],[994,280],[1018,303]], 10, 450) + ' ' +
    pts([[52,317],[76,317],[100,340],[124,354],[148,368],[172,375],[196,368],[220,362],[244,362],[268,343],[292,332],[316,332],[340,283],[364,250],[388,228],[412,200],[436,155],[460,147],[484,150],[508,150],[532,152],[556,153],[580,158],[604,157],[628,154],[652,150],[676,105],[700,93],[724,94],[748,99],[772,90],[796,84],[820,88],[844,103],[868,130],[892,165],[916,170],[940,182],[964,192],[988,185],[1012,158]], 340, 440) + ' ' +
    pts([[60,1020],[76,880],[100,760],[124,715],[148,685],[172,670],[196,640],[220,605],[244,590],[268,590],[292,590],[305,480],[316,385],[340,295],[364,230],[388,185],[412,163],[436,155],[460,172],[484,250],[508,348],[532,392],[556,420],[580,455],[604,510],[628,595],[652,655],[676,700],[700,752],[724,772],[748,776],[772,768],[796,765],[820,765]], 660, 130);
  var red = pts([[8,432],[34,450],[58,445],[82,434],[106,462],[130,482],[154,482],[178,445],[202,425],[226,398],[250,395],[274,420],[298,460],[322,476],[346,467],[370,467],[394,486],[418,485],[442,483],[466,495],[490,495],[514,470],[538,420],[562,340],[586,310],[610,285],[634,269],[658,269],[682,269],[706,269],[730,263],[754,254],[778,244],[802,240],[826,237],[850,245],[874,258],[898,300],[922,325],[946,330],[970,335],[994,358],[1018,372]], 10, 450) + ' ' +
    pts([[52,407],[76,404],[100,404],[124,406],[148,408],[172,412],[196,413],[220,409],[244,410],[268,409],[292,390],[316,385],[340,378],[364,362],[388,330],[412,312],[436,270],[460,255],[484,245],[508,236],[532,230],[556,230],[580,218],[604,208],[628,200],[652,192],[676,170],[700,147],[724,147],[748,152],[772,152],[796,150],[820,188],[844,210],[868,240],[892,268],[916,282],[940,298],[964,288],[988,274],[1012,250],[1036,200]], 340, 440) + ' ' +
    pts([[100,1020],[124,925],[148,875],[172,825],[196,795],[220,745],[244,715],[268,697],[292,685],[316,673],[340,525],[364,432],[388,360],[412,305],[436,288],[460,345],[484,455],[508,520],[532,572],[556,595],[580,610],[604,680],[628,770],[652,842],[676,865],[700,880],[724,885],[748,885],[772,868],[796,866],[820,845]], 660, 130);
  el('polyline', {points: blue, fill: 'none', stroke: '#0000cd', 'stroke-width': 2, 'stroke-linejoin': 'round'});
  el('polyline', {points: red, fill: 'none', stroke: '#f00', 'stroke-width': 2, 'stroke-linejoin': 'round'});

  // volume bars: top of each bar, then g = up, r = down
  var v1 = '408g 396g 417r 402g 384g 405r 408r 384g 357g 378r 393r 360g 354g 381r 378g 369g 363g 381r 390r 381g 378g 387r 324g 351r 384r 387r 402r 408r 408r 405g 417r 417r 414g 420r 423r 417g 414g 390g 396r 408r 423r 420g 426r 411g 423r 429r 429r 426g 426r 429r 426g 420g 420r 426r 420g 381g 402r 405r 396g 414r 408g 402g 411r 417r 405g 426r 423g 420g 408g 402g 417r 411g 417r 366g 387r 342g 330g 360r 324g';
  var v2 = '339r 375r 372g 375r 363g 30g 258r 345r 348r 378r 339g 336g 372r 390r 387g 273g 201g 321r 327r 366r 297g 114g 198r 321r 228g 249r 303r 117g 222r 204g 306r 339r 342r 342r 345r 378r 435r';
  (v1 + ' ' + v2).split(' ').forEach(function (s, i) {
    var y = Math.round(645 + parseInt(s, 10) / 3);
    var x = Math.max(12, 11 + 8 * i);
    var w = 16 + 8 * i - x;
    el('rect', {x: x, y: y, width: w, height: 790 - y, fill: s.slice(-1) === 'g' ? GREEN : CRIMSON});
  });

  // frame and axes
  el('path', {d: 'M11 107.5H1215M11.5 107V646M1214.5 107V791M11 645.500H1215M12 647.500H1215M12 648.500H1215M12.5 647V791M12 790.500H1215', stroke: '#000', fill: 'none'});
  var t = '', i;
  for (i = 0; i < 15; i++) t += 'M' + (13.5 + 64 * i) + ' 791v3';
  for (i = 0; i < 17; i++) t += 'M1215 ' + (111.5 + Math.round(33.2 * i)) + 'h3';
  el('path', {d: t + 'M1215 651.500h3M1215 783.500h3', stroke: '#000', fill: 'none'});
  el('path', {d: 'M944 111h8l-4 4z', fill: '#c0c0c0'});

  // current price tags
  el('rect', {x: 1215, y: 379, width: 44, height: 11, fill: '#0000cd'});
  el('rect', {x: 1215, y: 390, width: 44, height: 11, fill: '#000'});
  el('text', {x: 1220, y: 388, 'class': 'tag'}, '1223.20');
  el('text', {x: 1220, y: 399, 'class': 'tag'}, '1222.70');
})();
```
